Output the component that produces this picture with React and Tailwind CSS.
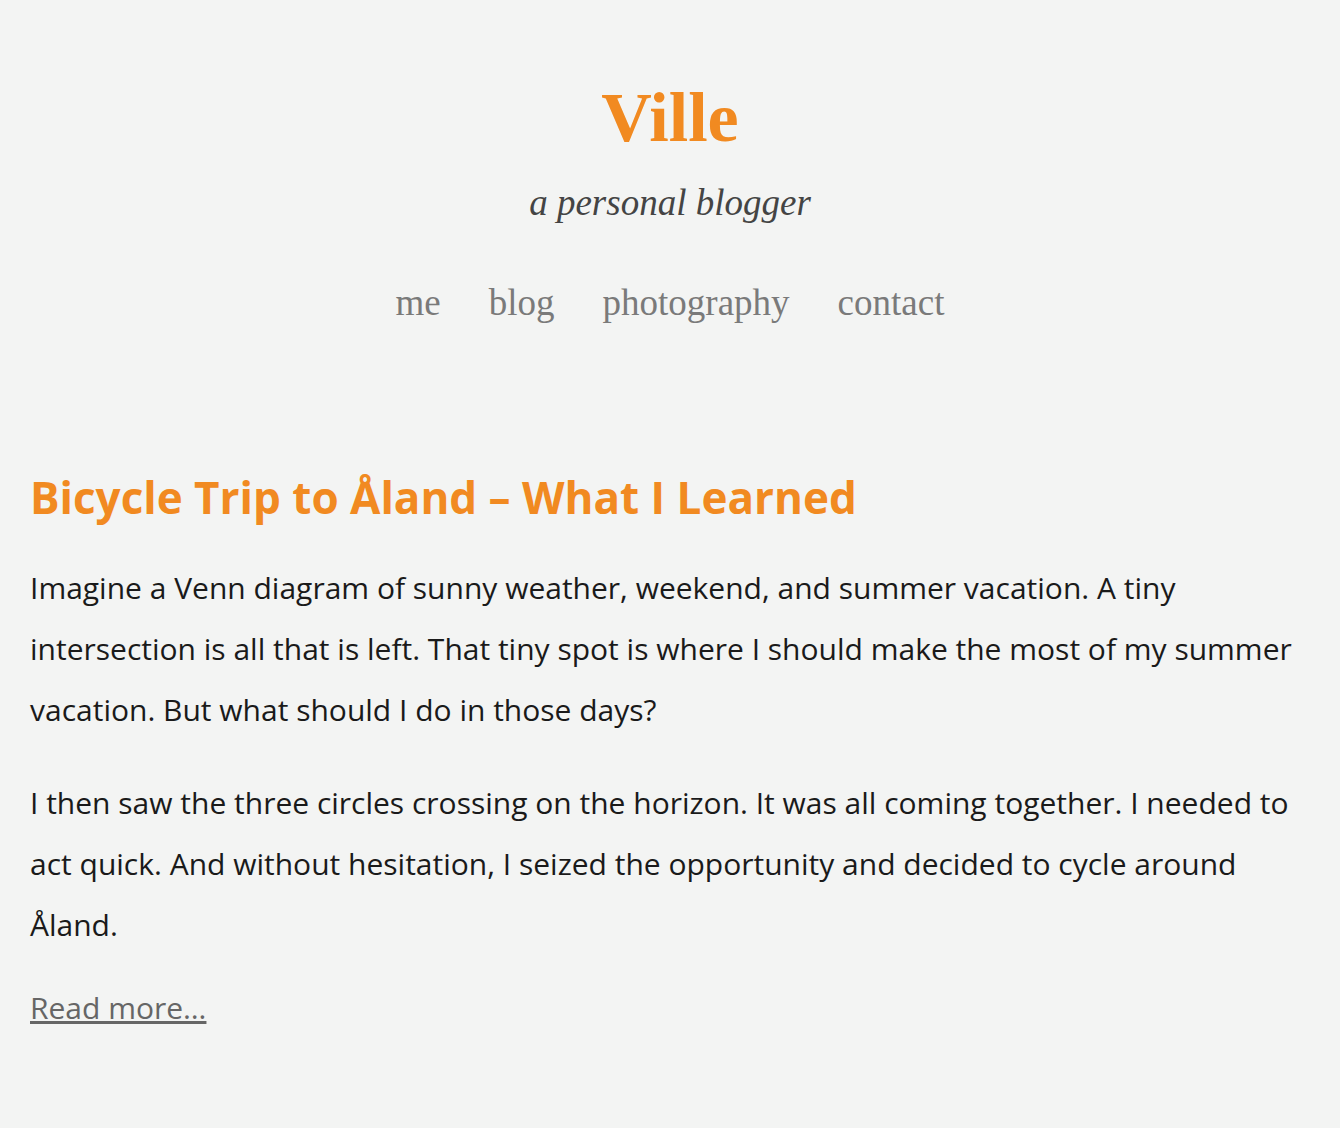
export default function App() {
  const nav = ["me", "blog", "photography", "contact"];
  return (
    <div className="min-h-[1128px] bg-[#f3f4f3] px-[30px] [font-family:'Open_Sans',sans-serif]">
      <header className="flex flex-col items-center pt-[78px]">
        <h1 className="text-[70px] leading-[80px] font-bold text-[#f18a21] [font-family:'Liberation_Serif',serif]">
          Ville
        </h1>
        <p className="mt-[25px] text-[37px] leading-[40px] italic text-[#444] [font-family:'Liberation_Serif',serif]">
          a personal blogger
        </p>
        <nav className="mt-[60px] flex gap-[48px] text-[37px] leading-[40px] text-[#7a7a7a] [font-family:'Liberation_Serif',serif]">
          {nav.map((n) => (
            <a key={n} href="#">
              {n}
            </a>
          ))}
        </nav>
      </header>
      <main className="mt-[146px]">
        <h2 className="text-[44px] leading-[56px] font-bold text-[#f18a21]">
          Bicycle Trip to Åland – What I Learned
        </h2>
        <div className="mt-[32px] text-[30px] leading-[61px] text-[#1a1a1a]">
          <p>
            Imagine a Venn diagram of sunny weather, weekend, and summer vacation. A tiny
            intersection is all that is left. That tiny spot is where I should make the most
            of my summer vacation. But what should I do in those days?
          </p>
          <p className="mt-[32px]">
            I then saw the three circles crossing on the horizon. It was all coming together.
            I needed to act quick. And without hesitation, I seized the opportunity and decided
            to cycle around Åland.
          </p>
        </div>
        <a href="#" className="mt-[33px] inline-block text-[30px] leading-[40px] text-[#666] underline">
          Read more…
        </a>
      </main>
    </div>
  );
}
